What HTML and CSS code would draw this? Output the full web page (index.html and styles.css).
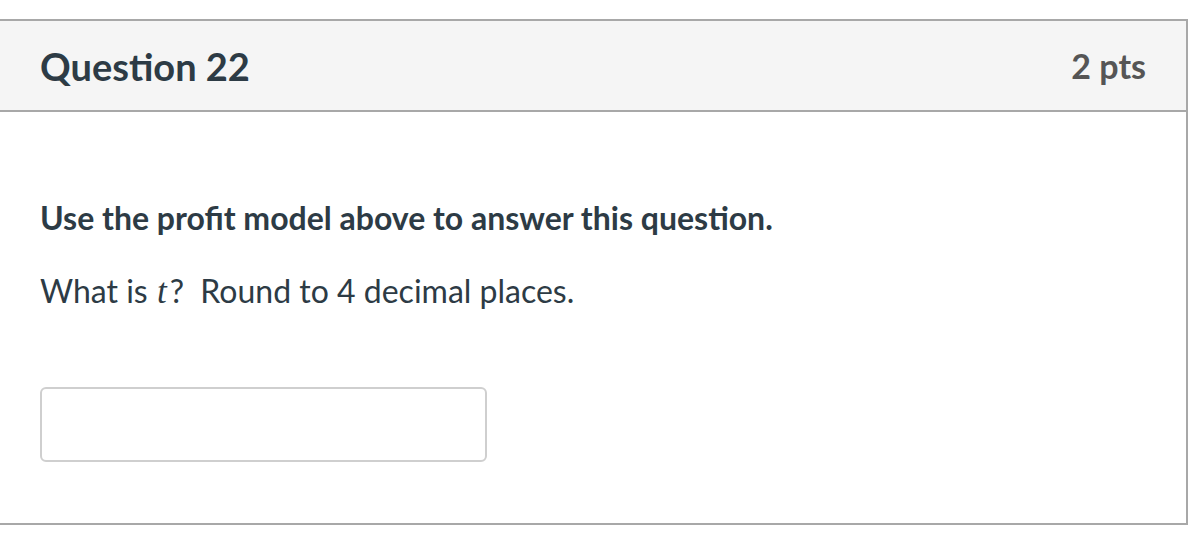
FILE: index.html
```html
<!DOCTYPE html>
<html>
<head>
<meta charset="utf-8">
<link rel="stylesheet" href="styles.css">
</head>
<body>
<div class="card">
  <div class="card-header">
    <h2 class="title">Question 22</h2>
    <span class="pts">2 pts</span>
  </div>
  <div class="card-body">
    <p class="lead">Use the profit model above to answer this question.</p>
    <p class="text">What is <span class="math">t</span>?&nbsp; Round to 4 decimal places.</p>
    <input class="answer" type="text">
  </div>
</div>
</body>
</html>
```
FILE: styles.css
```css
html, body {
  margin: 0;
  padding: 0;
  background: #fff;
  font-family: Lato, "Liberation Sans", sans-serif;
  color: #2d3b45;
}
.card {
  margin: 19px 5px 0 -2px;
  border: 2px solid #a8a8a8;
}
.card-header {
  display: flex;
  align-items: center;
  justify-content: space-between;
  height: 89px;
  padding: 0 40px;
  background: #f5f5f5;
  border-bottom: 2px solid #a8a8a8;
}
.title {
  margin: 0;
  font-size: 38px;
  font-weight: 700;
  color: #2d3b45;
}
.pts {
  font-size: 34px;
  font-weight: 700;
  color: #555555;
}
.card-body {
  padding: 81.5px 40px 61px 40px;
}
.lead, .text {
  margin: 0;
  font-size: 32px;
  line-height: 48px;
}
.lead {
  font-weight: 700;
  margin-bottom: 25px;
}
.math {
  font-family: "Liberation Serif", "DejaVu Serif", serif;
  font-style: italic;
  font-size: 35px;
  padding: 0 3px 0 1px;
}
.answer {
  display: block;
  margin-top: 71.5px;
  width: 447px;
  height: 75px;
  box-sizing: border-box;
  border: 2px solid #cfcfcf;
  border-radius: 6px;
  background: #fff;
  padding: 0;
  outline: none;
}
```
